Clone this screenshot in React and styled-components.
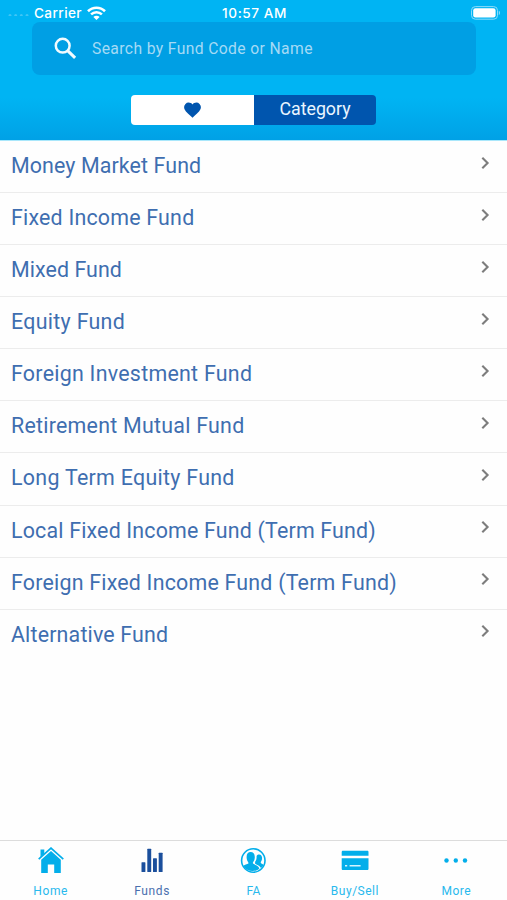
import React from "react";
import styled, { createGlobalStyle } from "styled-components";

const GlobalStyle = createGlobalStyle`
  * { box-sizing: border-box; }
  body { margin: 0; background: #fff; }
  button { border: 0; padding: 0; margin: 0; background: none; font: inherit; }
  svg { display: block; flex: none; }
`;

const Screen = styled.div`
  display: flex;
  flex-direction: column;
  width: 507px;
  height: 900px;
  overflow: hidden;
  background: #fefefe;
  font-family: Roboto, "Liberation Sans", sans-serif;
`;

const Header = styled.header`
  flex: none;
  height: 141px;
  background: linear-gradient(#00b4f3 0, #00b4f3 98px, #00a1e6 140px);
  border-bottom: 1px solid #a9e7fb;
`;

const StatusBar = styled.div`
  display: grid;
  grid-template-columns: 1fr auto 1fr;
  align-items: center;
  height: 22px;
  padding: 4px 6px 0 8px;
  color: #fff;
  font: 500 13.6px/18px Inter, sans-serif;
`;

const Carrier = styled.div`
  display: flex;
  align-items: center;
  gap: 5px;
  letter-spacing: 0.4px;
`;

const Clock = styled.div`
  letter-spacing: 0.55px;
`;

const BatterySlot = styled.div`
  justify-self: end;
`;

const SearchField = styled.label`
  display: flex;
  align-items: center;
  width: 444px;
  height: 53px;
  margin-left: 32px;
  padding-left: 22px;
  gap: 15px;
  border-radius: 8px;
  background: #009fe4;
`;

const SearchInput = styled.input`
  flex: 1;
  min-width: 0;
  padding: 0;
  border: 0;
  outline: 0;
  background: transparent;
  font: 400 15.7px/20px Roboto, sans-serif;
  letter-spacing: 0.37px;
  color: #fff;
  &::placeholder { color: #a5daf5; opacity: 1; }
`;

const Segments = styled.div`
  display: flex;
  width: 245px;
  height: 30px;
  margin: 20px 0 0 131px;
  overflow: hidden;
  border-radius: 4px;
`;

const Segment = styled.button`
  display: flex;
  flex: 0 0 ${(p) => (p.$active ? "122px" : "123px")};
  align-items: center;
  justify-content: center;
  background: ${(p) => (p.$active ? "#0055ae" : "#fff")};
  color: ${(p) => (p.$active ? "#eaf5ff" : "#0055ae")};
  font-size: 17.8px;
  line-height: 28px;
  padding-bottom: ${(p) => (p.$active ? "2px" : "0")};
`;

const FundList = styled.ul`
  flex: 1;
  margin: 0;
  padding: 0;
  list-style: none;
`;

const FundRow = styled.li`
  display: flex;
  justify-content: space-between;
  height: 52.08px;
  padding: 0 17px 0 11px;
  border-bottom: 1px solid #ececec;
  &:last-child { border-bottom: 0; }
  svg { margin-top: 14.5px; }
`;

const FundName = styled.span`
  color: #3f6eb0;
  font-size: 21.4px;
  line-height: 50px;
  white-space: nowrap;
  letter-spacing: ${(p) => p.$tracking}px;
`;

const TabBar = styled.nav`
  display: grid;
  grid-template-columns: repeat(5, 1fr);
  flex: none;
  height: 60px;
  border-top: 1px solid #dcdcdc;
`;

const Tab = styled.button`
  display: flex;
  flex-direction: column;
  align-items: center;
  padding-top: 6px;
  gap: 8px;
  color: ${(p) => (p.$active ? "#1b4f9c" : "#03aeea")};
`;

const TabLabel = styled.span`
  color: ${(p) => (p.$active ? "#4a6fae" : "#29b9ed")};
  font: 400 12px/16px Roboto, sans-serif;
  letter-spacing: ${(p) => p.$tracking}px;
`;

const SignalDots = () => (
  <svg width="21" height="5" viewBox="0 0 21 5" fill="#55cbf6">
    {[2, 7.7, 13.3, 19].map((x) => <circle key={x} cx={x} cy="4.500" r="1.5" opacity=".75" />)}
  </svg>
);

const Wifi = () => (
  <svg width="19" height="15" viewBox="0 0 19 15" fill="none" stroke="#fff">
    <path d="M1 5.2a12.1 12.1 0 0 1 17 0" strokeWidth="2.6" />
    <path d="M4.1 8.4a7.7 7.7 0 0 1 10.8 0" strokeWidth="2.500" />
    <path d="M9.5 14.1 6.4 11a4.4 4.4 0 0 1 6.2 0z" fill="#fff" stroke="none" />
  </svg>
);

const Battery = () => (
  <svg width="31" height="14" viewBox="0 0 31 14">
    <rect x="1.5" y=".6" width="26" height="12.6" rx="3.8" fill="none" stroke="#8cdbfa" />
    <rect x="3.2" y="2.2" width="22.4" height="9.4" rx="2.3" fill="#fff" />
    <path d="M28.8 4.8c1.6.5 1.6 3.7 0 4.2z" fill="#8cdbfa" />
  </svg>
);

const SearchIcon = () => (
  <svg width="23" height="23" viewBox="0 0 23 23" fill="none" stroke="#f2fbff">
    <circle cx="8.700" cy="8.700" r="6.900" strokeWidth="2.500" />
    <path d="m13.600 13.600 7.500 7.300" strokeWidth="3" />
  </svg>
);

const Heart = () => (
  <svg width="18" height="16" viewBox="0 0 18 16" fill="currentColor">
    <path d="M8.500 15.700 7.200 14.500C2.700 10.500.1 8.100.1 5A4.500 4.500 0 0 1 4.600.6C6.100.6 7.600 1.300 8.500 2.400 9.400 1.300 10.900.6 12.400.6A4.500 4.500 0 0 1 16.900 5c0 3.100-2.600 5.500-7.100 9.500z" />
  </svg>
);

const Chevron = () => (
  <svg width="9" height="14" viewBox="0 0 9 14" fill="none" stroke="#7d7d7d" strokeWidth="2.1">
    <path d="m1.300 1.700 5.300 5.300-5.300 5.300" />
  </svg>
);

const HomeIcon = () => (
  <svg width="26" height="28" viewBox="0 0 26 28" fill="currentColor">
    <path d="M2.500 2.500h3.800v4L2.500 10z" />
    <path d="M.7 12.100 13 1.100l12.300 11" fill="none" stroke="currentColor" strokeWidth="1.700" />
    <path d="M13 4 22.800 12.800V26h-6.600v-8.500H9.800V26H3.200V12.800z" />
  </svg>
);

const FundsIcon = () => (
  <svg width="26" height="28" viewBox="0 0 26 28" fill="currentColor">
    <rect x="2.500" y="15.200" width="3.900" height="9.800" rx=".5" />
    <rect x="8.300" y="1.700" width="3.900" height="23.300" rx=".5" />
    <rect x="14" y="11.300" width="3.900" height="13.700" rx=".5" />
    <rect x="19.700" y="5.700" width="3.900" height="19.300" rx=".5" />
  </svg>
);

const AdvisorIcon = () => (
  <svg width="26" height="28" viewBox="0 0 26 28" fill="currentColor">
    <circle cx="13.300" cy="13.500" r="11.700" fill="none" stroke="currentColor" strokeWidth="1.600" />
    <path d="M3.500 19c1.500-1.600 5-1.700 5-2.900 0-1.300-1.900-2.200-1.900-6.200 0-3 1.500-4.900 4-4.900s4.200 1.900 4.200 4.900c0 4-2 4.900-2 6.200 0 1.600 5.700 1.800 6.600 5.500-1.700 1.700-4.100 2.500-6.800 2.500-3.900 0-7.200-1.900-9.100-5.100z" />
    <path d="M15.100 14.700c1.300-1.600 1.600-3.200 1.500-5.700.6-1.200 1.500-1.600 2.500-1.600 1.900 0 3 1.500 3 3.600 0 2.900-1.400 3.600-1.400 4.500 0 1 2.200 1.400 2.800 2.500-.6 1.200-1.500 2.300-2.500 3-1.100-2.600-4.700-3.300-5.900-4.300z" />
  </svg>
);

const CardIcon = () => (
  <svg width="28" height="28" viewBox="0 0 28 28" fill="currentColor">
    <path d="M.7 8.700V5.100c0-.9.500-1.300 1.300-1.300h24.200c.8 0 1.300.4 1.300 1.300v3.600z" />
    <path d="M.7 11.200h26.800v10.600c0 .8-.5 1.200-1.300 1.200H2c-.8 0-1.300-.4-1.300-1.200z" />
    <path d="M4 18.800h2.200M8.600 18.800h11" stroke="#d6f4ff" strokeWidth="1.500" />
  </svg>
);

const MoreIcon = () => (
  <svg width="26" height="28" viewBox="0 0 26 28" fill="currentColor">
    {[3.500, 12.800, 22].map((x) => <circle key={x} cx={x} cy="13.500" r="2.200" />)}
  </svg>
);

const funds = [
  ["Money Market Fund", 0.11],
  ["Fixed Income Fund", 0.21],
  ["Mixed Fund", 0.07],
  ["Equity Fund", 0.3],
  ["Foreign Investment Fund", 0.26],
  ["Retirement Mutual Fund", 0.25],
  ["Long Term Equity Fund", 0.29],
  ["Local Fixed Income Fund (Term Fund)", 0.18],
  ["Foreign Fixed Income Fund (Term Fund)", 0.21],
  ["Alternative Fund", 0.17],
];

const tabs = [
  { label: "Home", Icon: HomeIcon, tracking: 0.6 },
  { label: "Funds", Icon: FundsIcon, tracking: 0.6, active: true },
  { label: "FA", Icon: AdvisorIcon, tracking: 0.3 },
  { label: "Buy/Sell", Icon: CardIcon, tracking: 0.5 },
  { label: "More", Icon: MoreIcon, tracking: 0.5 },
];

export default function App() {
  return (
    <Screen>
      <GlobalStyle />
      <Header>
        <StatusBar>
          <Carrier><SignalDots />Carrier<Wifi /></Carrier>
          <Clock>10:57 AM</Clock>
          <BatterySlot><Battery /></BatterySlot>
        </StatusBar>
        <SearchField>
          <SearchIcon />
          <SearchInput placeholder="Search by Fund Code or Name" />
        </SearchField>
        <Segments>
          <Segment aria-label="Favourites"><Heart /></Segment>
          <Segment $active>Category</Segment>
        </Segments>
      </Header>
      <FundList>
        {funds.map(([name, tracking]) => (
          <FundRow key={name}>
            <FundName $tracking={tracking}>{name}</FundName>
            <Chevron />
          </FundRow>
        ))}
      </FundList>
      <TabBar>
        {tabs.map(({ label, Icon, tracking, active }) => (
          <Tab key={label} $active={active}>
            <Icon />
            <TabLabel $active={active} $tracking={tracking}>{label}</TabLabel>
          </Tab>
        ))}
      </TabBar>
    </Screen>
  );
}
